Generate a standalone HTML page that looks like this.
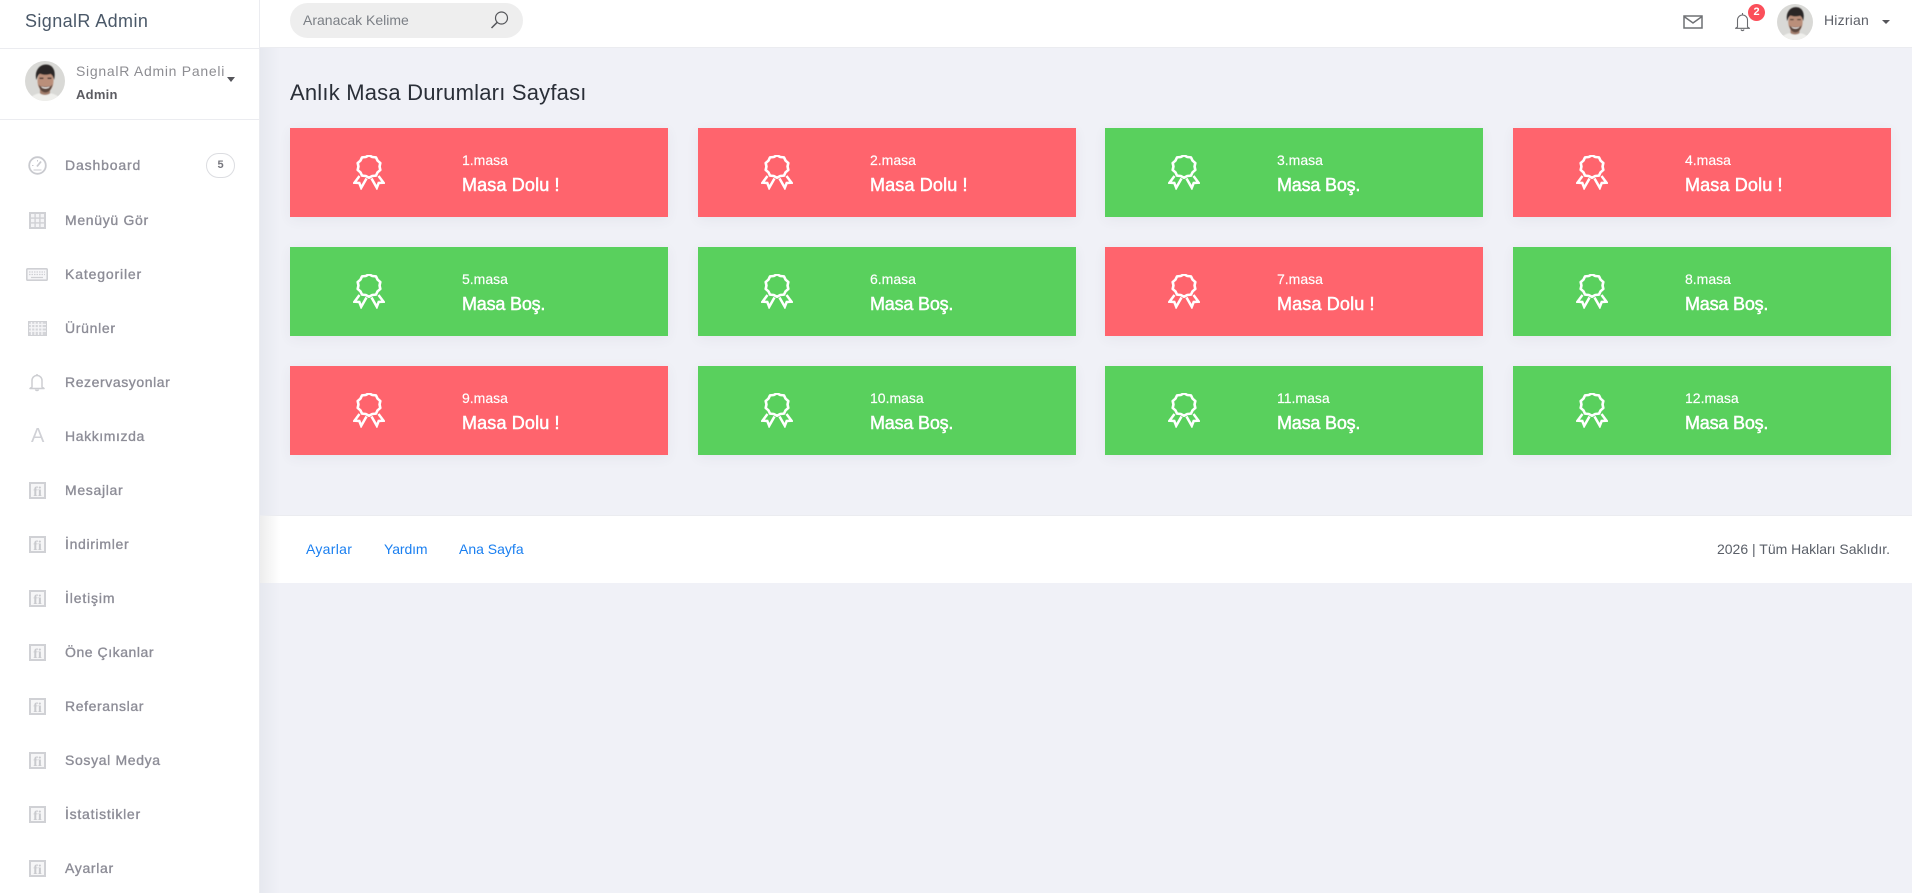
<!DOCTYPE html>
<html lang="tr">
<head>
<meta charset="utf-8">
<title>SignalR Admin</title>
<style>
*{box-sizing:border-box;margin:0;padding:0}
html,body{width:1912px;height:893px;overflow:hidden;background:#f0f1f7;font-family:"Liberation Sans",sans-serif}
.a{position:absolute;white-space:nowrap}
#top{position:absolute;left:260px;top:0;width:1652px;height:48px;background:#fff;border-bottom:1px solid #ebecf0}
#brand{position:absolute;left:0;top:0;width:260px;height:49px;background:#fff;border-bottom:1px solid #ebecf0;border-right:1px solid #ebecf0}
#side{position:absolute;left:0;top:0;width:260px;height:893px;background:#fff;border-right:1px solid #ebecf0}
#shadow{position:absolute;left:260px;top:48px;width:20px;height:845px;background:linear-gradient(90deg,#e6e8ef,rgba(240,241,247,0))}
#foot{position:absolute;left:260px;top:515px;width:1652px;height:68px;background:#fff;border-top:1px solid #ebecf0}
#footshadow{position:absolute;left:260px;top:516px;width:20px;height:67px;background:linear-gradient(90deg,#ededed,rgba(255,255,255,0))}
.item{position:absolute;left:65px;font-size:14px;font-weight:400;-webkit-text-stroke:.35px #8d8d97;color:#8d8d97;line-height:20px;letter-spacing:.68px;white-space:nowrap}
.ic{position:absolute}
.card{position:absolute;width:378px;height:89px;box-shadow:0 3px 12px rgba(69,65,78,.06);color:#fff}
.r{background:#ff646d}.g{background:#59d05d}
.card svg{position:absolute;left:63px;top:27px}
.card .n{position:absolute;left:172px;top:24px;font-size:14px;line-height:17px;-webkit-text-stroke:.15px #fff}
.card .s{position:absolute;left:172px;top:46px;font-size:18px;line-height:22px;font-weight:400;-webkit-text-stroke:.5px #fff;letter-spacing:.15px}
.g .s{letter-spacing:-.2px}
.fl{position:absolute;top:541px;font-size:14px;line-height:17px;color:#1a7ff0}
</style>
</head>
<body>
<svg width="0" height="0" style="position:absolute">
<defs>
<symbol id="ros" viewBox="0 0 32 35">
<path transform="translate(16 11.500) scale(1.100 1.040) translate(-16 -11.500)" d="M16 .7L18.970 2.370 22.350 2.760 23.770 5.860 26.270 8.160 25.600 11.500 26.270 14.840 23.770 17.140 22.350 20.240 18.970 20.630 16 22.300 13.030 20.630 9.650 20.240 8.230 17.140 5.730 14.840 6.400 11.500 5.730 8.160 8.230 5.860 9.650 2.760 13.030 2.370z" fill="none" stroke="#fff" stroke-width="2.400" stroke-linejoin="round"/>
<path d="M6.500 21L1.500 27.700 6.300 28 8.200 32.800 13.500 23.500M25.500 21L30.500 27.700 25.700 28 23.800 32.800 18.500 23.500" fill="none" stroke="#fff" stroke-width="2.500" stroke-linejoin="miter"/>
</symbol>
<symbol id="fi" viewBox="0 0 17 17">
<rect x="1" y="1" width="15" height="15" fill="#f6f6f7" stroke="#d0d1d5" stroke-width="2"/>
<text x="8.500" y="14" font-family="Liberation Serif,serif" font-weight="700" font-size="14" fill="#c9cace" text-anchor="middle">fi</text>
</symbol>
<symbol id="face" viewBox="0 0 40 40">
<clipPath id="cc"><circle cx="20" cy="20" r="20"/></clipPath>
<filter id="soft"><feGaussianBlur stdDeviation=".45"/></filter>
<g clip-path="url(#cc)">
<rect width="40" height="40" fill="#d9d9d6"/>
<g filter="url(#soft)">
<path d="M4 41c1-7 8-9 16-9s15 2 16 9z" fill="#efefec"/>
<path d="M15 26h10v6.500c-3 2-7 2-10 0z" fill="#a37e6c"/>
<ellipse cx="20.500" cy="20" rx="8" ry="11" fill="#ba8f7a"/>
<path d="M11.500 19c-2.500-9 3-15.500 9.500-15.500s10.500 6 8 15.500c-.8-3-1.500-5-3.500-6-4 1.200-7.500 1-10.500-.2-2 1.200-2.500 3.200-3.500 6.200z" fill="#2b2725"/>
<path d="M13.500 23c.8 6 4 8.500 7 8.500s6.200-2.500 7-8.500c-1 2-2 2.500-3.500 2.300-2 .5-5 .5-7 0-1.500.2-2.500-.3-3.500-2.300z" fill="#5b463d"/>
<path d="M16 25.200c2.400 1.400 6.600 1.400 9 0-1 3-8 3-9 0z" fill="#f6f2ef"/>
<path d="M14.500 17.300h4M22.500 17.300h4" stroke="#3a2c28" stroke-width="1.300"/>
</g>
</g>
</symbol>
</defs>
</svg>

<div id="top"></div>
<div id="shadow"></div>
<div id="side"></div>
<div id="brand"></div>

<div class="a" style="left:25px;top:11px;font-size:18px;line-height:21px;color:#4a5868;letter-spacing:.4px">SignalR Admin</div>

<svg class="ic" style="left:25px;top:61px" width="40" height="40"><use href="#face"/></svg>
<div class="a" style="left:76px;top:62px;font-size:14px;line-height:18px;color:#8d8d92;letter-spacing:.72px">SignalR Admin Paneli</div>
<div class="a" style="left:76px;top:87px;font-size:13px;line-height:16px;font-weight:700;color:#5c5c62;letter-spacing:.25px">Admin</div>
<div class="a" style="left:227px;top:77px;width:0;height:0;border:4px solid transparent;border-top:5px solid #55555a;border-bottom:0"></div>
<div class="a" style="left:0;top:119px;width:259px;height:1px;background:#ebecf0"></div>

<!-- sidebar -->
<svg class="ic" style="left:28px;top:156px" width="19" height="19" viewBox="0 0 19 19" fill="none" stroke="#c9cacf"><circle cx="9.500" cy="9.500" r="8.300" stroke-width="1.800"/><path d="M9 10.500l4-5" stroke-width="1.800"/><path d="M4 9.500h1.500M9.500 4v1.500M5.500 14h8" stroke-width="1"/></svg>
<div class="item" style="top:155px;letter-spacing:.85px">Dashboard</div>
<div class="a" style="left:206px;top:153px;width:29px;height:25px;border:1px solid #dcdde1;border-radius:13px;text-align:center;font-size:11px;line-height:23px;font-weight:700;color:#77777e">5</div>

<svg class="ic" style="left:29px;top:212px" width="17" height="17" viewBox="0 0 17 17"><rect width="17" height="17" fill="#d0d1d5"/><g fill="#f4f4f6"><rect x="2" y="2" width="3.400" height="3.400"/><rect x="6.800" y="2" width="3.400" height="3.400"/><rect x="11.600" y="2" width="3.400" height="3.400"/><rect x="2" y="6.800" width="3.400" height="3.400"/><rect x="6.800" y="6.800" width="3.400" height="3.400"/><rect x="11.600" y="6.800" width="3.400" height="3.400"/><rect x="2" y="11.600" width="3.400" height="3.400"/><rect x="6.800" y="11.600" width="3.400" height="3.400"/><rect x="11.600" y="11.600" width="3.400" height="3.400"/></g></svg>
<div class="item" style="top:210px">Menüyü Gör</div>

<svg class="ic" style="left:26px;top:268px" width="22" height="13" viewBox="0 0 22 13"><rect x=".8" y=".8" width="20.400" height="11.400" rx="1" fill="#f6f6f8" stroke="#cfd0d4" stroke-width="1.600"/><path d="M3 4h16M3 6.500h16" stroke="#cfd0d4" stroke-width="1.200" stroke-dasharray="1.500 1"/><path d="M5 9.500h12" stroke="#cfd0d4" stroke-width="1.200"/></svg>
<div class="item" style="top:264px;letter-spacing:.85px">Kategoriler</div>

<svg class="ic" style="left:28px;top:321px" width="19" height="15" viewBox="0 0 19 15"><rect width="19" height="15" fill="#d4d5d9"/><g stroke="#f5f5f7" stroke-width="1.300"><path d="M0 3.400h19M0 6.800h19M0 10.200h19"/><path d="M3.500 0v15M7 0v15M10.500 0v15M14 0v15"/></g><rect x=".5" y=".5" width="18" height="14" fill="none" stroke="#d0d1d5"/></svg>
<div class="item" style="top:318px">Ürünler</div>

<svg class="ic" style="left:29px;top:373px" width="16" height="19" viewBox="0 0 16 19" fill="none" stroke="#cdced2" stroke-width="1.500"><path d="M3 14V7.500a5 5 0 0 1 10 0V14l2 1.500H1z" stroke-linejoin="round"/><path d="M6.500 16.500a1.600 1.600 0 0 0 3 0M8 1v1.500"/></svg>
<div class="item" style="top:372px;letter-spacing:.58px">Rezervasyonlar</div>

<div class="a" style="left:31px;top:425px;font-size:20px;line-height:23px;color:#d0d1d6">A</div>
<div class="item" style="top:426px;letter-spacing:.6px">Hakkımızda</div>

<svg class="ic" style="left:29px;top:482px" width="17" height="17"><use href="#fi"/></svg><div class="item" style="top:480px">Mesajlar</div>
<svg class="ic" style="left:29px;top:536px" width="17" height="17"><use href="#fi"/></svg><div class="item" style="top:534px">İndirimler</div>
<svg class="ic" style="left:29px;top:590px" width="17" height="17"><use href="#fi"/></svg><div class="item" style="top:588px;letter-spacing:.85px">İletişim</div>
<svg class="ic" style="left:29px;top:644px" width="17" height="17"><use href="#fi"/></svg><div class="item" style="top:642px;letter-spacing:.55px">Öne Çıkanlar</div>
<svg class="ic" style="left:29px;top:698px" width="17" height="17"><use href="#fi"/></svg><div class="item" style="top:696px;letter-spacing:.6px">Referanslar</div>
<svg class="ic" style="left:29px;top:752px" width="17" height="17"><use href="#fi"/></svg><div class="item" style="top:750px;letter-spacing:.65px">Sosyal Medya</div>
<svg class="ic" style="left:29px;top:806px" width="17" height="17"><use href="#fi"/></svg><div class="item" style="top:804px;letter-spacing:.75px">İstatistikler</div>
<svg class="ic" style="left:29px;top:860px" width="17" height="17"><use href="#fi"/></svg><div class="item" style="top:858px">Ayarlar</div>

<!-- top bar -->
<div class="a" style="left:290px;top:3px;width:233px;height:35px;border-radius:18px;background:#eeeeee"></div>
<div class="a" style="left:303px;top:12px;font-size:14px;line-height:17px;color:#7b7f85">Aranacak Kelime</div>
<svg class="ic" style="left:490px;top:11px" width="19" height="18" viewBox="0 0 19 18" fill="none" stroke="#55565a"><circle cx="11.500" cy="7" r="6" stroke-width="1.200"/><path d="M7.200 11.300L1.500 17" stroke-width="1.500"/></svg>

<svg class="ic" style="left:1683px;top:15px" width="20" height="14" viewBox="0 0 20 14" fill="none" stroke="#6e7074" stroke-width="1.500"><rect x="1" y="1" width="18" height="12"/><path d="M1 1.500l9 6.500 9-6.500"/></svg>
<svg class="ic" style="left:1734px;top:12px" width="17" height="20" viewBox="0 0 17 20" fill="none" stroke="#6a6b6f" stroke-width="1.100"><path d="M3.500 15V8a5 5 0 0 1 10 0v7l2 1.300H1.500z" stroke-linejoin="round"/><path d="M7 17.500a1.600 1.600 0 0 0 3 0M8.500 1v1.500"/></svg>
<div class="a" style="left:1748px;top:4px;width:17px;height:17px;border-radius:50%;background:#fb4f5a;color:#fff;font-size:11px;font-weight:700;line-height:17px;text-align:center">2</div>
<svg class="ic" style="left:1777px;top:4px" width="36" height="36"><use href="#face"/></svg>
<div class="a" style="left:1824px;top:12px;font-size:14px;line-height:17px;color:#5d6068;letter-spacing:.2px">Hizrian</div>
<div class="a" style="left:1882px;top:20px;width:0;height:0;border:4px solid transparent;border-top:4px solid #55555a;border-bottom:0"></div>

<!-- heading -->
<div class="a" style="left:290px;top:80px;font-size:22px;line-height:26px;color:#2a2f38;letter-spacing:.2px">Anlık Masa Durumları Sayfası</div>

<!-- cards -->
<div class="card r" style="left:290px;top:128px"><svg width="32" height="35"><use href="#ros"/></svg><div class="n">1.masa</div><div class="s">Masa Dolu !</div></div>
<div class="card r" style="left:698px;top:128px"><svg width="32" height="35"><use href="#ros"/></svg><div class="n">2.masa</div><div class="s">Masa Dolu !</div></div>
<div class="card g" style="left:1105px;top:128px"><svg width="32" height="35"><use href="#ros"/></svg><div class="n">3.masa</div><div class="s">Masa Boş.</div></div>
<div class="card r" style="left:1513px;top:128px"><svg width="32" height="35"><use href="#ros"/></svg><div class="n">4.masa</div><div class="s">Masa Dolu !</div></div>

<div class="card g" style="left:290px;top:247px"><svg width="32" height="35"><use href="#ros"/></svg><div class="n">5.masa</div><div class="s">Masa Boş.</div></div>
<div class="card g" style="left:698px;top:247px"><svg width="32" height="35"><use href="#ros"/></svg><div class="n">6.masa</div><div class="s">Masa Boş.</div></div>
<div class="card r" style="left:1105px;top:247px"><svg width="32" height="35"><use href="#ros"/></svg><div class="n">7.masa</div><div class="s">Masa Dolu !</div></div>
<div class="card g" style="left:1513px;top:247px"><svg width="32" height="35"><use href="#ros"/></svg><div class="n">8.masa</div><div class="s">Masa Boş.</div></div>

<div class="card r" style="left:290px;top:366px"><svg width="32" height="35"><use href="#ros"/></svg><div class="n">9.masa</div><div class="s">Masa Dolu !</div></div>
<div class="card g" style="left:698px;top:366px"><svg width="32" height="35"><use href="#ros"/></svg><div class="n">10.masa</div><div class="s">Masa Boş.</div></div>
<div class="card g" style="left:1105px;top:366px"><svg width="32" height="35"><use href="#ros"/></svg><div class="n">11.masa</div><div class="s">Masa Boş.</div></div>
<div class="card g" style="left:1513px;top:366px"><svg width="32" height="35"><use href="#ros"/></svg><div class="n">12.masa</div><div class="s">Masa Boş.</div></div>

<!-- footer -->
<div id="foot"></div>
<div id="footshadow"></div>
<div class="fl" style="left:306px;letter-spacing:.3px">Ayarlar</div>
<div class="fl" style="left:384px;letter-spacing:-.1px">Yardım</div>
<div class="fl" style="left:459px">Ana Sayfa</div>
<div class="a" style="right:22px;top:541px;font-size:14px;line-height:17px;color:#5a5f68">2026 | Tüm Hakları Saklıdır.</div>
</body>
</html>
